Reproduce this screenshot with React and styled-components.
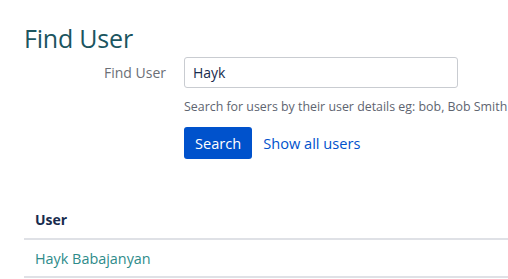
import React, { useState } from "react";
import styled, { createGlobalStyle } from "styled-components";

const GlobalStyle = createGlobalStyle`
  body {
    margin: 0;
    background: #fff;
    font-family: "Open Sans", "Noto Sans", sans-serif;
    color: #172b4d;
  }
`;

const Page = styled.div`
  padding: 20px 0 0 24px;
`;

const Title = styled.h1`
  margin: 0;
  font-size: 25px;
  font-weight: 400;
  line-height: 36px;
  color: #1b5560;
  letter-spacing: -0.2px;
`;

const Form = styled.form`
  display: grid;
  grid-template-columns: 142px 1fr;
  column-gap: 18px;
  margin-top: 1px;
`;

const Label = styled.label`
  text-align: right;
  font-size: 14px;
  color: #6b6f76;
  line-height: 31px;
`;

const Field = styled.div`
  display: flex;
  flex-direction: column;
`;

const Input = styled.input`
  width: 274px;
  height: 31px;
  box-sizing: border-box;
  border: 1px solid #c9ccd1;
  border-radius: 3px;
  padding: 0 8px;
  font-family: inherit;
  font-size: 14px;
  color: #172b4d;
  outline: none;
`;

const Help = styled.div`
  margin-top: 10px;
  font-size: 12.4px;
  line-height: 18px;
  color: #5e6470;
  white-space: nowrap;
`;

const Actions = styled.div`
  display: flex;
  align-items: center;
  gap: 11px;
  margin-top: 11px;
`;

const Button = styled.button`
  height: 32px;
  padding: 0 11px;
  border: none;
  border-radius: 3px;
  background: #0052cc;
  color: #fff;
  font-family: inherit;
  font-size: 14.6px;
`;

const Link = styled.a`
  font-size: ${p => p.$teal ? "14.4px" : "14.6px"};
  color: ${p => p.$teal ? "#2e8b8a" : "#0052cc"};
  text-decoration: none;
`;

const Table = styled.table`
  margin-top: 42px;
  width: 100%;
  border-collapse: collapse;
`;

const Th = styled.th`
  text-align: left;
  font-size: 14px;
  font-weight: 700;
  color: #172b4d;
  padding: 9px 11px 9px 11px;
  border-bottom: 2px solid #dfe1e6;
`;

const Td = styled.td`
  font-size: 14px;
  padding: 9px 11px 8px 11px;
  border-bottom: 2px solid #dfe1e6;
`;

export default function App() {
  const [query, setQuery] = useState("Hayk");

  return (
    <Page>
      <GlobalStyle />
      <Title>Find User</Title>
      <Form onSubmit={e => e.preventDefault()}>
        <Label htmlFor="q">Find User</Label>
        <Field>
          <Input id="q" value={query} onChange={e => setQuery(e.target.value)} />
          <Help>Search for users by their user details eg: bob, Bob Smith</Help>
          <Actions>
            <Button type="submit">Search</Button>
            <Link href="#">Show all users</Link>
          </Actions>
        </Field>
      </Form>
      <Table>
        <thead>
          <tr>
            <Th>User</Th>
          </tr>
        </thead>
        <tbody>
          <tr>
            <Td>
              <Link $teal href="#">Hayk Babajanyan</Link>
            </Td>
          </tr>
        </tbody>
      </Table>
    </Page>
  );
}
